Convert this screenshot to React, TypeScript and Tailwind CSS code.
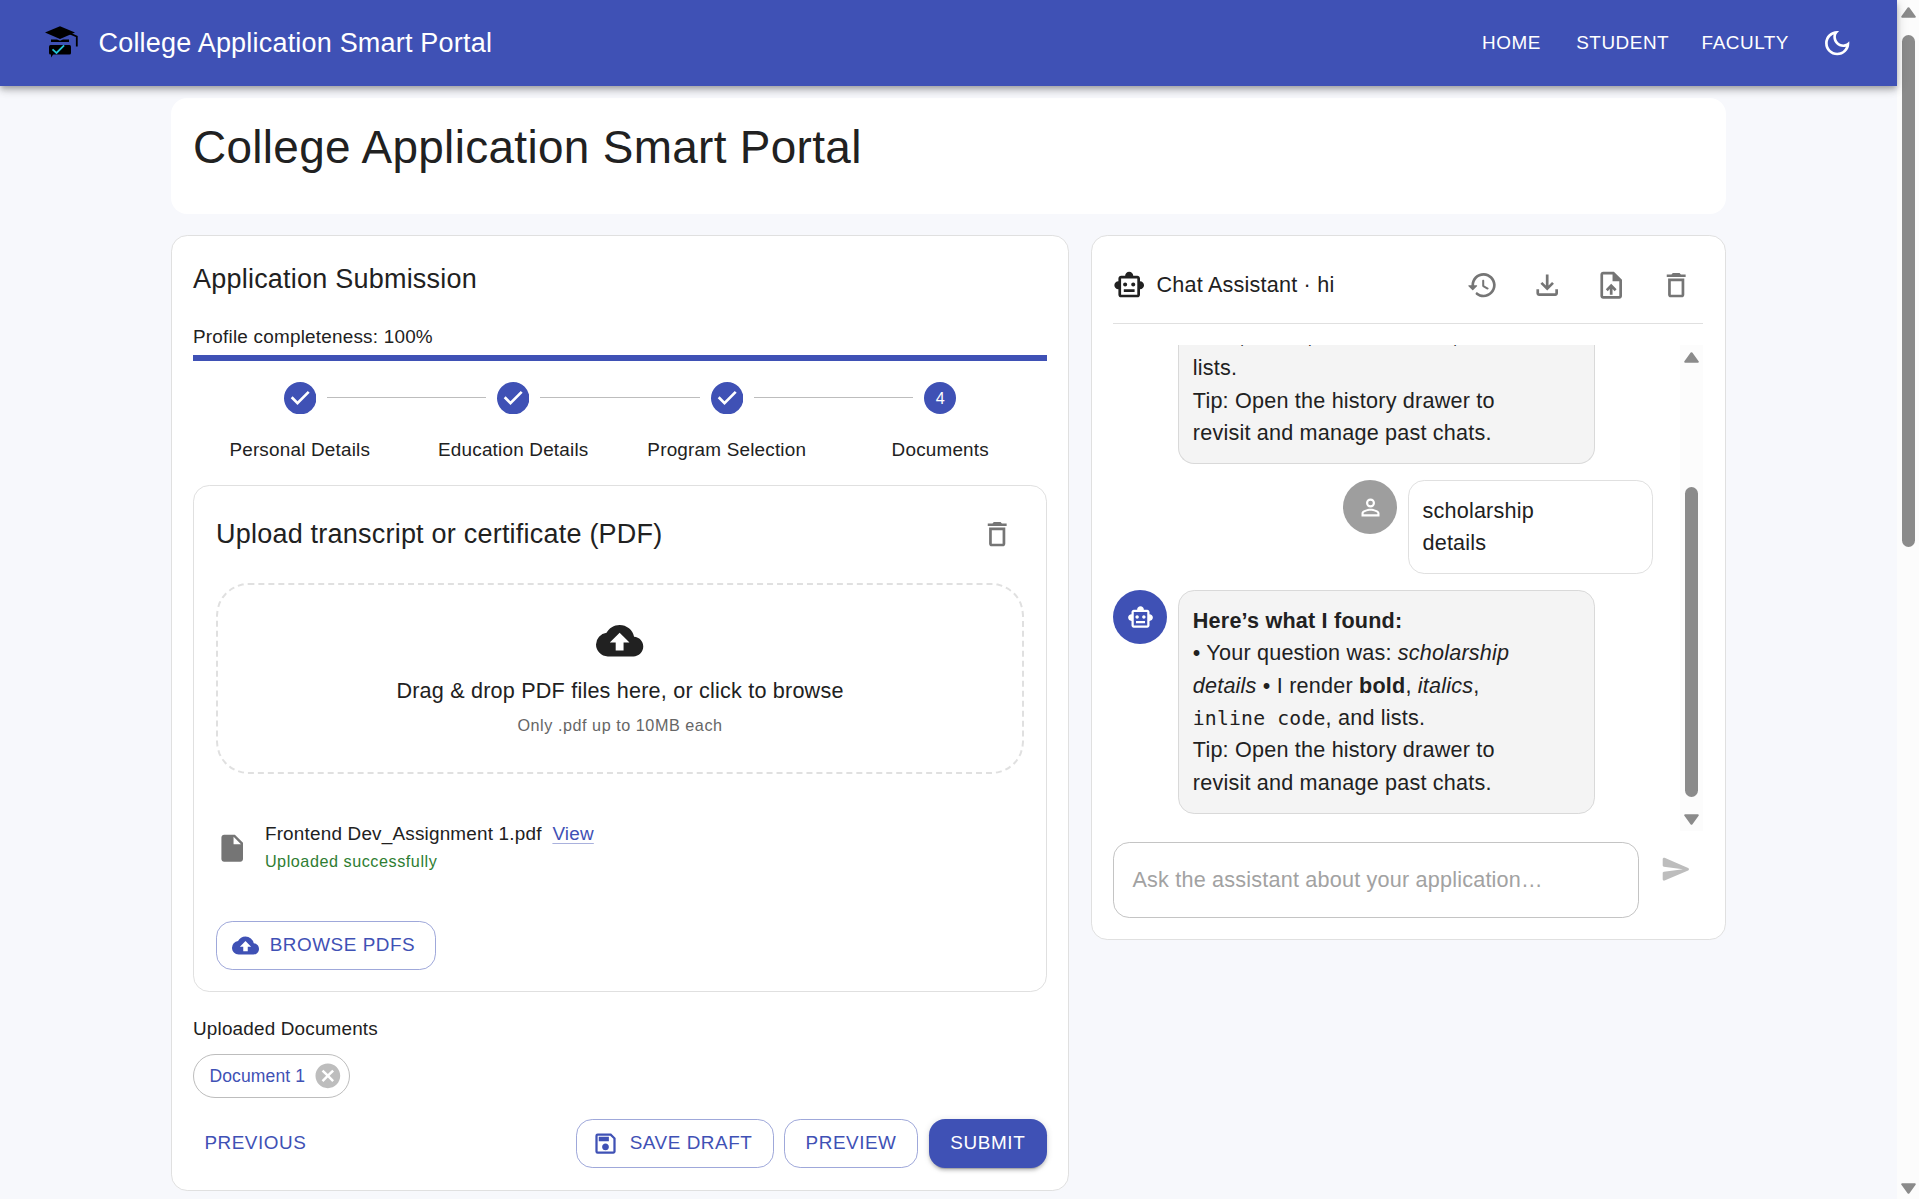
import React from "react";
import {
  MdCancel,
  MdCloudUpload,
  MdDeleteOutline,
  MdInsertDriveFile,
  MdOutlineDarkMode,
  MdOutlineFileDownload,
  MdOutlineSave,
  MdOutlineSmartToy,
  MdOutlineUploadFile,
  MdPersonOutline,
} from "react-icons/md";

const steps = ["Personal Details", "Education Details", "Program Selection", "Documents"];

function Logo() {
  return (
    <svg className="mb-[2px] h-[32px] w-[34px]" viewBox="0 0 34 32">
      <path d="M0 6.5 15 .2l15 6.3L15 13z" fill="#000" />
      <path d="M24 7.2 31.8 10.5v10" fill="none" stroke="#000" strokeWidth="1.8" />
      <path d="M6 13.5h6l3 1.2 3-1.2h6V16H6z" fill="#000" />
      <rect x="4" y="19" width="22" height="9.4" rx="1.5" fill="#000" />
      <path d="M6 28v3.5l2.5-3.5z" fill="#000" />
      <path d="m7.5 23.3 4 3.6 7.6-7.6" fill="none" stroke="#22c3d6" strokeWidth="1.8" />
    </svg>
  );
}

function StepCheckIcon() {
  return (
    <svg viewBox="0 0 24 24" className="size-[32.4px]" fill="#3f51b5">
      <path d="M12 0a12 12 0 1 0 0 24 12 12 0 0 0 0-24zm-2 17l-5-5 1.4-1.4 3.6 3.6 7.6-7.6L19 8l-9 9z" />
    </svg>
  );
}

function HistoryIcon() {
  return (
    <svg viewBox="0 0 24 24" className="size-[32.4px]" fill="currentColor">
      <path d="M13.26 3C8.17 2.86 4 6.95 4 12H2.21c-.45 0-.67.54-.35.85l2.79 2.8c.2.2.51.2.71 0l2.79-2.8c.31-.31.09-.85-.36-.85H6c0-3.9 3.18-7.05 7.1-7 3.72.05 6.85 3.18 6.9 6.9.05 3.91-3.1 7.1-7 7.1-1.61 0-3.1-.55-4.28-1.48-.4-.31-.96-.28-1.32.08-.42.42-.39 1.13.08 1.49C9 20.29 10.91 21 13 21c5.05 0 9.14-4.17 9-9.26-.13-4.69-4.05-8.61-8.74-8.74zm-.51 5c-.41 0-.75.34-.75.75v3.68c0 .35.19.68.49.86l3.12 1.85c.36.21.82.09 1.03-.26.21-.36.1-.82-.26-1.03l-2.88-1.71v-3.4c0-.4-.34-.74-.75-.74z" />
    </svg>
  );
}

function SendIcon() {
  return (
    <svg viewBox="0 0 24 24" className="size-[32.4px]" fill="currentColor">
      <path d="M3.4 20.4l17.45-7.48c.81-.35.81-1.49 0-1.84L3.4 3.6c-.66-.29-1.39.2-1.39.91L2 9.12c0 .5.37.93.87.99L17 12 2.87 13.88c-.5.07-.87.5-.87 1l.01 4.61c0 .71.73 1.2 1.39.91z" />
    </svg>
  );
}

function Arrow({ down = false }: { down?: boolean }) {
  return (
    <svg viewBox="0 0 15 11" className={down ? "h-[11px] w-[15px] rotate-180" : "h-[11px] w-[15px]"}>
      <path d="M7.5 1.2 13.8 9.8H1.2z" fill="#8b8b8b" stroke="#8b8b8b" strokeWidth="2" strokeLinejoin="round" />
    </svg>
  );
}

function IconButton({ children }: { children: React.ReactNode }) {
  return <button className="flex size-[54px] shrink-0 items-center justify-center text-[#757575]">{children}</button>;
}

function NavButton({ children }: { children: React.ReactNode }) {
  return (
    <button className="h-[49px] min-w-[86.4px] px-[10.8px] pt-px text-[18.9px] tracking-[0.54px] text-white">{children}</button>
  );
}

function OutlinedButton({ icon, children }: { icon?: React.ReactNode; children: React.ReactNode }) {
  return (
    <button className="flex h-[49px] items-center rounded-[16.2px] border border-[#9fa8da] px-[20.25px] text-[18.9px] tracking-[0.54px] text-[#3f51b5]">
      {icon && <span className="-ml-[5.4px] mr-[10.8px]">{icon}</span>}
      {children}
    </button>
  );
}

function Header() {
  return (
    <header className="relative z-10 flex h-[86px] shrink-0 items-center bg-[#3f51b5] pr-[32.4px] pl-[45px] text-white shadow-[0_3px_5px_-1px_rgba(0,0,0,0.2),0_5px_7px_rgba(0,0,0,0.14),0_1px_13px_rgba(0,0,0,0.12)]">
      <Logo />
      <span className="ml-[19.5px] text-[27px] tracking-[0.2px]">College Application Smart Portal</span>
      <nav className="ml-auto flex items-center gap-[10.8px]">
        <NavButton>HOME</NavButton>
        <NavButton>STUDENT</NavButton>
        <NavButton>FACULTY</NavButton>
        <button className="flex size-[54px] items-center justify-center">
          <MdOutlineDarkMode className="size-[32.4px]" />
        </button>
      </nav>
    </header>
  );
}

function Stepper() {
  return (
    <div className="mt-[21px] flex">
      {steps.map((label, i) => (
        <div key={label} className="flex flex-1 flex-col items-center">
          <div className="flex h-[32.4px] w-full items-center">
            <div className={i > 0 ? "mr-[10.8px] h-px flex-1 bg-[#bdbdbd]" : "mr-[10.8px] h-px flex-1"} />
            {i < 3 ? (
              <StepCheckIcon />
            ) : (
              <span className="flex size-[32.4px] items-center justify-center rounded-full bg-[#3f51b5] text-[16.2px] text-white">
                4
              </span>
            )}
            <div className={i < 3 ? "ml-[10.8px] h-px flex-1 bg-[#bdbdbd]" : "ml-[10.8px] h-px flex-1"} />
          </div>
          <span className="mt-[21.6px] text-[18.9px] leading-[27px] tracking-[0.2px]">{label}</span>
        </div>
      ))}
    </div>
  );
}

function UploadCard() {
  return (
    <div className="mt-[22px] flex h-[507px] flex-col rounded-[16.2px] border border-[#e0e0e0] px-[22px] pt-[21px]">
      <div className="flex h-[54px] items-center justify-between">
        <h3 className="pt-px text-[27px] leading-[43px] tracking-[0.22px]">Upload transcript or certificate (PDF)</h3>
        <IconButton>
          <MdDeleteOutline className="size-[32.4px]" />
        </IconButton>
      </div>
      <div className="mt-[22px] flex h-[191px] flex-col items-center rounded-[32.4px] border-2 border-dashed border-[#e0e0e0] pt-[32px]">
        <MdCloudUpload className="size-[47.25px]" />
        <p className="mt-[11px] text-[21.6px] leading-[32.4px] tracking-[0.2px]">
          Drag &amp; drop PDF files here, or click to browse
        </p>
        <p className="mt-[5px] text-[16.2px] leading-[27px] tracking-[0.54px] text-[#666666]">Only .pdf up to 10MB each</p>
      </div>
      <div className="mt-[43px] flex h-[62px] items-center">
        <MdInsertDriveFile className="size-[32.4px] text-[#757575]" />
        <div className="ml-[16.5px]">
          <p className="-mt-px mb-px text-[18.9px] leading-[27px] tracking-[0.2px]">
            Frontend Dev_Assignment 1.pdf
            <a className="ml-[10.8px] text-[#3f51b5] underline decoration-[#a9b1dd] decoration-1 underline-offset-[3px]">View</a>
          </p>
          <p className="text-[16.2px] leading-[27px] tracking-[0.54px] text-[#2e7d32]">Uploaded successfully</p>
        </div>
      </div>
      <div className="mt-[42px] flex">
        <OutlinedButton icon={<MdCloudUpload className="size-[27px]" />}>BROWSE PDFS</OutlinedButton>
      </div>
    </div>
  );
}

function ApplicationPanel() {
  return (
    <section className="flex h-[956px] w-[898px] flex-col rounded-[16.2px] border border-[#e0e0e0] bg-white px-[21px] pt-[21.6px]">
      <h2 className="text-[27px] leading-[43.2px] tracking-[0.22px]">Application Submission</h2>
      <p className="mt-[22px] text-[18.9px] leading-[27px] tracking-[0.22px]">Profile completeness: 100%</p>
      <div className="mt-[5px] h-[6px] shrink-0 bg-[#3f51b5]" />
      <Stepper />
      <UploadCard />
      <p className="mt-[23px] text-[18.9px] leading-[27px] tracking-[0.18px]">Uploaded Documents</p>
      <div className="mt-[12px] flex">
        <span className="flex h-[44px] items-center rounded-full border border-[#bdbdbd] pr-[6.5px] pl-[15.5px] text-[17.55px] tracking-[0.1px] text-[#3f51b5]">
          Document 1
          <MdCancel className="ml-[7.5px] size-[29.7px] text-[#bdbdbd]" />
        </span>
      </div>
      <div className="mt-[21px] flex items-center gap-[10.8px]">
        <button className="mr-auto h-[49px] px-[11.4px] text-[18.9px] tracking-[0.54px] text-[#3f51b5]">PREVIOUS</button>
        <OutlinedButton icon={<MdOutlineSave className="size-[27px]" />}>SAVE DRAFT</OutlinedButton>
        <OutlinedButton>PREVIEW</OutlinedButton>
        <button className="h-[49px] rounded-[16.2px] bg-[#3f51b5] px-[21.6px] text-[18.9px] tracking-[0.65px] text-white shadow-[0_4px_1px_-3px_rgba(0,0,0,0.2),0_3px_3px_rgba(0,0,0,0.14),0_1px_7px_rgba(0,0,0,0.12)]">
          SUBMIT
        </button>
      </div>
    </section>
  );
}

function BotAvatar() {
  return (
    <span className="flex size-[54px] shrink-0 items-center justify-center rounded-full bg-[#3f51b5] text-white">
      <MdOutlineSmartToy className="size-[27px]" />
    </span>
  );
}

function Code({ children }: { children: React.ReactNode }) {
  return <code className="font-['DejaVu_Sans_Mono',monospace] text-[19.73px] leading-none">{children}</code>;
}

function ChatPanel() {
  return (
    <section className="flex h-[705px] w-[635px] flex-col rounded-[16.2px] border border-[#e0e0e0] bg-white pt-[22px] pr-[22px] pl-[21px]">
      <div className="flex h-[66px] shrink-0 items-start border-b border-[#e0e0e0]">
        <div className="flex h-[54px] items-center gap-[11.2px]">
          <MdOutlineSmartToy className="size-[32.4px]" />
          <span className="text-[21.6px] tracking-[0.2px]">Chat Assistant · hi</span>
        </div>
        <div className="ml-auto flex gap-[10.5px]">
          <IconButton>
            <HistoryIcon />
          </IconButton>
          <IconButton>
            <MdOutlineFileDownload className="size-[32.4px]" />
          </IconButton>
          <IconButton>
            <MdOutlineUploadFile className="size-[32.4px]" />
          </IconButton>
          <IconButton>
            <MdDeleteOutline className="size-[32.4px]" />
          </IconButton>
        </div>
      </div>

      <div className="mt-[21px] flex h-[486px] shrink-0 overflow-hidden">
        <div className="flex flex-1 flex-col justify-end gap-[16px] pb-[17px] text-[21.6px] leading-[32.4px] tracking-[0.2px]">
          <div className="ml-[64.8px] flex h-[119px] w-[417px] flex-col justify-end rounded-b-[16.2px] border border-t-0 border-[#d9d9d9] bg-[#f4f4f4] px-[14px] pb-[13.3px] whitespace-nowrap">
            <p>
              <b>bold</b>, <i>italics</i>, <Code>inline code</Code>, and
              <br />
              lists.
              <br />
              Tip: Open the history drawer to
              <br />
              revisit and manage past chats.
            </p>
          </div>
          <div className="flex justify-end gap-[10.8px] pr-[27px]">
            <span className="flex size-[54px] shrink-0 items-center justify-center rounded-full bg-[#9e9e9e] text-white">
              <MdPersonOutline className="size-[27px]" />
            </span>
            <div className="h-[94px] w-[245px] rounded-[16.2px] border border-[#e0e0e0] px-[13.5px] pt-[13.6px]">
              scholarship
              <br />
              details
            </div>
          </div>
          <div className="flex gap-[10.8px]">
            <BotAvatar />
            <div className="h-[224px] w-[417px] rounded-[16.2px] border border-[#d9d9d9] bg-[#f4f4f4] px-[14px] pt-[13.7px] whitespace-nowrap">
              <b>Here’s what I found:</b>
              <br />• Your question was: <i>scholarship</i>
              <br />
              <i>details</i> • I render <b>bold</b>, <i>italics</i>,
              <br />
              <Code>inline code</Code>, and lists.
              <br />
              Tip: Open the history drawer to
              <br />
              revisit and manage past chats.
            </div>
          </div>
        </div>
        <div className="flex w-[23px] shrink-0 flex-col items-center bg-[#fcfcfc] pt-[7px] pb-[6px]">
          <Arrow />
          <div className="mt-auto mb-[17px] h-[310px] w-[13px] rounded-full bg-[#8b8b8b]" />
          <Arrow down />
        </div>
      </div>

      <div className="mt-[11px] flex">
        <div className="flex h-[76px] w-[526px] items-center rounded-[16.2px] border border-[#c4c4c4] px-[18.5px] text-[21.6px] tracking-[0.2px] text-[#a2a2a2]">
          Ask the assistant about your application…
        </div>
        <button className="ml-[10px] flex size-[54px] items-center justify-center text-[#bdbdbd]">
          <SendIcon />
        </button>
      </div>
    </section>
  );
}

export default function App() {
  return (
    <div className="flex h-[1199px] w-[1919px] overflow-hidden bg-[#f7f8fc] font-['Liberation_Sans',Arial,sans-serif] text-[#212121]">
      <div className="flex w-[1897px] flex-col">
        <Header />
        <main className="mt-[12px] pl-[171px]">
          <div className="h-[116px] w-[1555px] rounded-[16.2px] bg-white px-[22px] pt-[20.6px]">
            <h1 className="text-[45.9px] leading-[56.7px] tracking-[0.33px]">College Application Smart Portal</h1>
          </div>
          <div className="mt-[21px] flex items-start gap-[22px]">
            <ApplicationPanel />
            <ChatPanel />
          </div>
        </main>
      </div>
      <div className="flex w-[22px] flex-col items-center bg-[#fcfcfc] pt-[7px] pb-[5px]">
        <Arrow />
        <div className="mt-[17px] h-[512px] w-[13px] rounded-full bg-[#8b8b8b]" />
        <div className="mt-auto flex">
          <Arrow down />
        </div>
      </div>
    </div>
  );
}
